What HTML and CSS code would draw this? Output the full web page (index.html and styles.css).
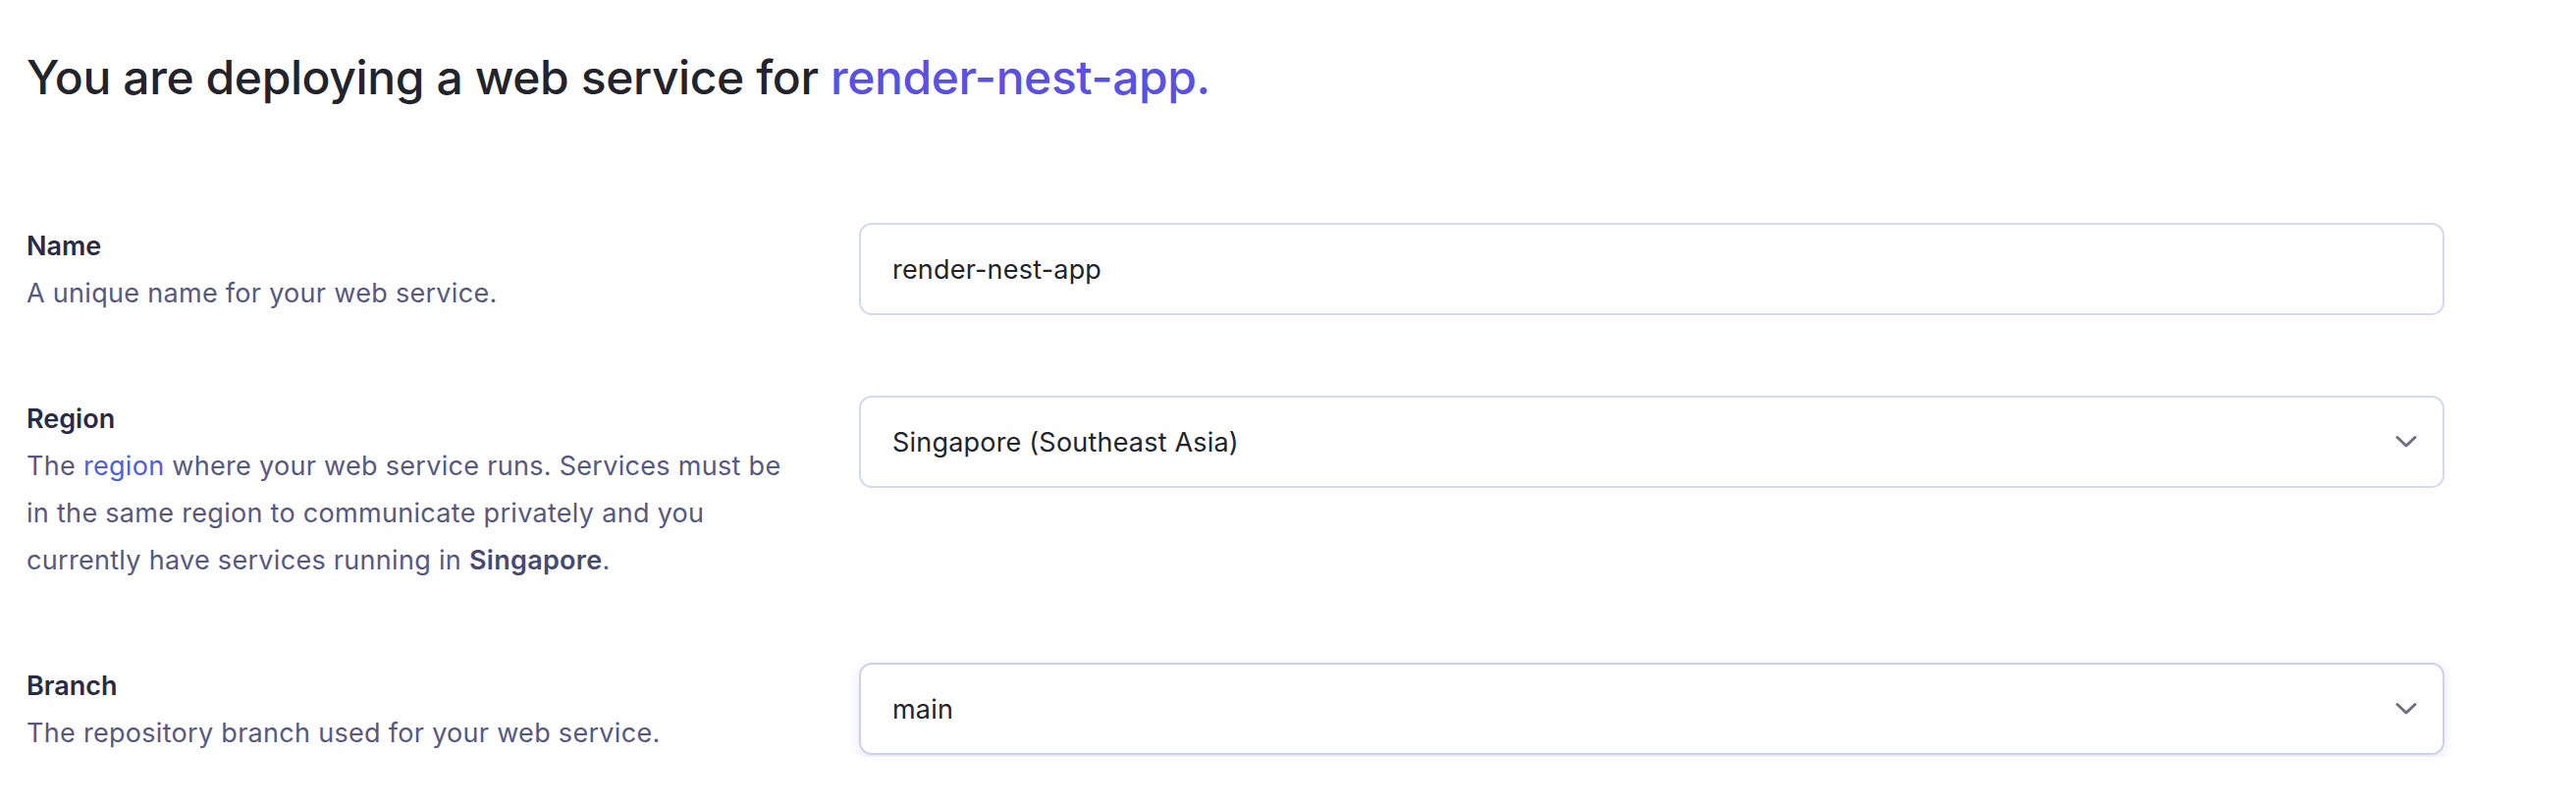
FILE: index.html
```html
<!DOCTYPE html>
<html lang="en">
<head>
<meta charset="utf-8">
<title>Deploy web service</title>
<link rel="stylesheet" href="styles.css">
</head>
<body>
<main class="page">
  <h1 class="title">You are deploying a web service for <span class="title-accent">render-nest-app.</span></h1>

  <div class="form">
    <div class="row">
      <div class="info">
        <div class="label">Name</div>
        <p class="desc">A unique name for your web service.</p>
      </div>
      <div class="field">
        <div class="control">render-nest-app</div>
      </div>
    </div>

    <div class="row">
      <div class="info">
        <div class="label">Region</div>
        <p class="desc">The <a class="link" href="#">region</a> where your web service runs. Services must be in the same region to communicate privately and you currently have services running in <strong class="strong">Singapore</strong>.</p>
      </div>
      <div class="field">
        <div class="control select">
          <span>Singapore (Southeast Asia)</span>
          <svg class="chevron" width="22" height="14" viewBox="0 0 22 14" aria-hidden="true"><path d="M2 2.5 L11 11 L20 2.5" fill="none" stroke="#6e7083" stroke-width="3" stroke-linecap="round" stroke-linejoin="round"/></svg>
        </div>
      </div>
    </div>

    <div class="row">
      <div class="info">
        <div class="label">Branch</div>
        <p class="desc">The repository branch used for your web service.</p>
      </div>
      <div class="field">
        <div class="control select focused">
          <span>main</span>
          <svg class="chevron" width="22" height="14" viewBox="0 0 22 14" aria-hidden="true"><path d="M2 2.5 L11 11 L20 2.5" fill="none" stroke="#6e7083" stroke-width="3" stroke-linecap="round" stroke-linejoin="round"/></svg>
        </div>
      </div>
    </div>
  </div>
</main>
</body>
</html>
```

FILE: styles.css
```css
* {
  box-sizing: border-box;
}

html, body {
  margin: 0;
  padding: 0;
  background: #ffffff;
}

body {
  font-family: Inter, "Noto Sans", "Liberation Sans", sans-serif;
  color: #22232b;
}

.page {
  width: 2490px;
  padding: 47px 0 0 27px;
}

.title {
  margin: 0 0 116px 0;
  font-size: 48px;
  line-height: 64px;
  font-weight: 500;
  color: #22232b;
  letter-spacing: -0.4px;
}

.title-accent {
  color: #5a50e4;
}

.form {
  display: flex;
  flex-direction: column;
  gap: 80px;
}

.row {
  display: flex;
  align-items: flex-start;
  gap: 68px;
}

.info {
  flex: 0 0 780px;
}

.label {
  font-size: 27px;
  line-height: 48px;
  font-weight: 600;
  color: #2a2a45;
}

.desc {
  margin: 0;
  font-size: 27px;
  line-height: 48px;
  font-weight: 400;
  letter-spacing: 0.3px;
  color: #575880;
}

.link {
  color: #4d5ee6;
  text-decoration: none;
}

.strong {
  font-weight: 600;
  color: #48496e;
}

.field {
  flex: 1 1 auto;
}

.control {
  height: 94px;
  border: 2px solid #d2dbee;
  border-radius: 13px;
  background: #ffffff;
  padding: 0 26px 0 32px;
  display: flex;
  align-items: center;
  font-size: 27px;
  letter-spacing: 0.2px;
  color: #22232b;
}

.select {
  justify-content: space-between;
}

.chevron {
  display: block;
}

.focused {
  border-color: #cbd1ef;
  box-shadow: 0 3px 12px rgba(90, 100, 170, 0.16);
}
```
